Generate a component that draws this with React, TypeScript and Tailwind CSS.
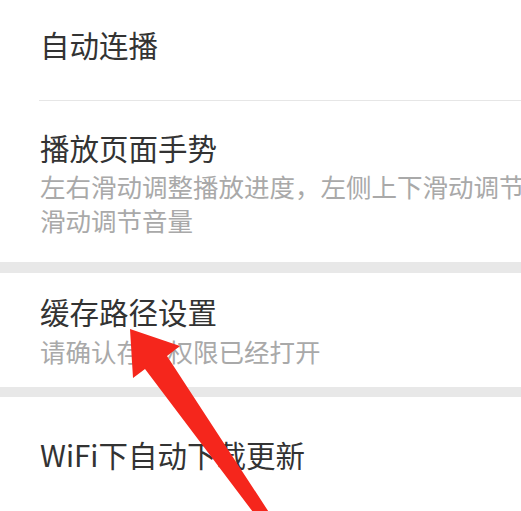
const font = { fontFamily: '"Noto Sans CJK SC", "Noto Sans", sans-serif' };

function Title({ children }: { children: React.ReactNode }) {
  return <div className="text-[29.5px] leading-[36px] text-[#333333] whitespace-nowrap">{children}</div>;
}

function Sub({ children, className = '' }: { children: React.ReactNode; className?: string }) {
  return (
    <div className={`text-[25.5px] leading-[34px] text-[#a9a9a9] whitespace-nowrap ${className}`}>{children}</div>
  );
}

export default function App() {
  return (
    <div className="relative w-[521px] h-[511px] overflow-hidden bg-white" style={font}>
      <div className="h-[100px] pl-[40px] pt-[26px]">
        <Title>自动连播</Title>
      </div>
      <div className="ml-[39px] h-px bg-[#e6e6e6]" />

      <div className="pl-[40px] pt-[28px] pb-[25px]">
        <Title>播放页面手势</Title>
        <Sub className="mt-[4px]">左右滑动调整播放进度，左侧上下滑动调节亮度，右侧上下</Sub>
        <Sub>滑动调节音量</Sub>
      </div>
      <div className="h-[11px] bg-[#e8e8e8]" />

      <div className="pl-[40px] pt-[20px] pb-[19px]">
        <Title>缓存路径设置</Title>
        <Sub className="mt-[5px]">请确认存储权限已经打开</Sub>
      </div>
      <div className="h-[10px] bg-[#e8e8e8]" />

      <div className="pl-[40px] pt-[39px]">
        <Title>WiFi下自动下载更新</Title>
      </div>

      <svg className="absolute inset-0 pointer-events-none" width="521" height="511" viewBox="0 0 521 511">
        <polygon
          points="130,329 133,378 145,369 259,520 274,520 167,356 180,346"
          fill="#f5261c"
        />
      </svg>
    </div>
  );
}
